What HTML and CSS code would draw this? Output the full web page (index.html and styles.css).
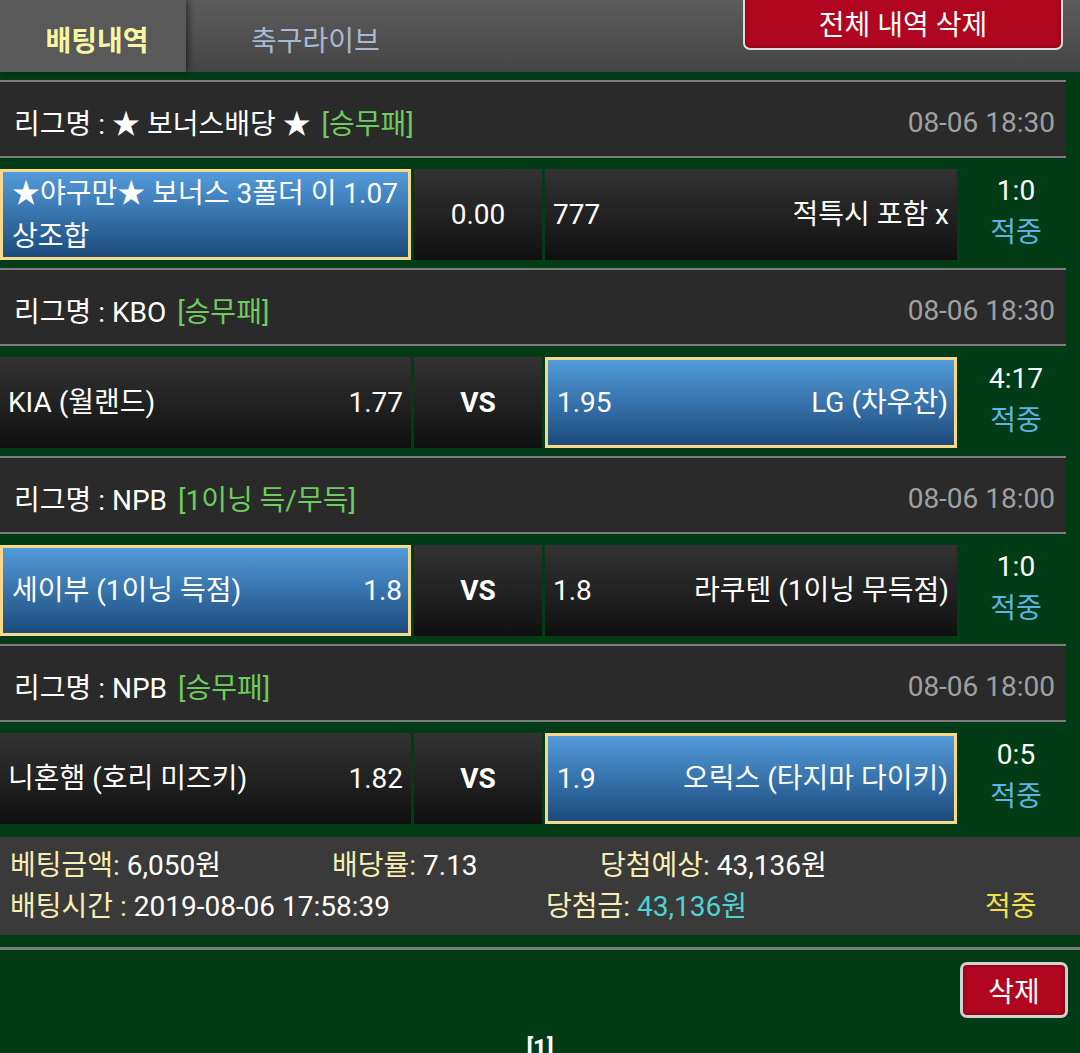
FILE: index.html
```html
<!DOCTYPE html>
<html lang="ko">
<head>
    <meta charset="UTF-8">
    <meta name="viewport" content="width=device-width, initial-scale=1.0">
    <title>배팅내역</title>
    <link rel="stylesheet" href="styles.css">
</head>
<body>

<div class="topbar">
    <div class="tab active">배팅내역</div>
    <div class="tab">축구라이브</div>
    <button class="btn-red btn-all">전체 내역 삭제</button>
</div>

<div class="list">
    <div class="league">
        <span>리그명 : ★ 보너스배당 ★ <span class="type">[승무패]</span></span>
        <span class="time">08-06 18:30</span>
    </div>
    <div class="match">
        <div class="cell sel"><span class="wrap">★야구만★ 보너스 3폴더 이 1.07 상조합</span></div>
        <div class="cell mid">0.00</div>
        <div class="cell"><span>777</span><span>적특시 포함 x</span></div>
        <div class="result"><div>1:0</div><div class="hit">적중</div></div>
    </div>

    <div class="league">
        <span>리그명 : KBO <span class="type">[승무패]</span></span>
        <span class="time">08-06 18:30</span>
    </div>
    <div class="match">
        <div class="cell"><span>KIA (월랜드)</span><span>1.77</span></div>
        <div class="cell mid vs">VS</div>
        <div class="cell sel"><span>1.95</span><span>LG (차우찬)</span></div>
        <div class="result"><div>4:17</div><div class="hit">적중</div></div>
    </div>

    <div class="league">
        <span>리그명 : NPB <span class="type">[1이닝 득/무득]</span></span>
        <span class="time">08-06 18:00</span>
    </div>
    <div class="match">
        <div class="cell sel"><span>세이부 (1이닝 득점)</span><span>1.8</span></div>
        <div class="cell mid vs">VS</div>
        <div class="cell"><span>1.8</span><span>라쿠텐 (1이닝 무득점)</span></div>
        <div class="result"><div>1:0</div><div class="hit">적중</div></div>
    </div>

    <div class="league">
        <span>리그명 : NPB <span class="type">[승무패]</span></span>
        <span class="time">08-06 18:00</span>
    </div>
    <div class="match">
        <div class="cell"><span>니혼햄 (호리 미즈키)</span><span>1.82</span></div>
        <div class="cell mid vs">VS</div>
        <div class="cell sel"><span>1.9</span><span>오릭스 (타지마 다이키)</span></div>
        <div class="result"><div>0:5</div><div class="hit">적중</div></div>
    </div>
</div>

<div class="summary">
    <div class="sum-row">
        <span class="s1"><span class="lbl">베팅금액:</span> 6,050원</span>
        <span class="s2"><span class="lbl">배당률:</span> 7.13</span>
        <span class="s3"><span class="lbl">당첨예상:</span> 43,136원</span>
    </div>
    <div class="sum-row">
        <span class="s1 wide"><span class="lbl">배팅시간 :</span> 2019-08-06 17:58:39</span>
        <span class="s3 win"><span class="lbl">당첨금:</span> <span class="money">43,136원</span></span>
        <span class="state">적중</span>
    </div>
</div>

<div class="actions">
    <button class="btn-red btn-del">삭제</button>
</div>

<div class="pager">[1]</div>

</body>
</html>
```

FILE: styles.css
```css
body {
    margin: 0;
    background-color: #013c16;
    font-family: Roboto, "Noto Sans CJK KR", sans-serif;
    font-size: 28px;
    color: #fff;
    width: 1080px;
    overflow: hidden;
}
.topbar {
    height: 72px;
    display: flex;
    align-items: flex-start;
    background: linear-gradient(#5c5c5c, #454545);
}
.tab {
    height: 72px;
    line-height: 84px;
    color: #a9b9d2;
    padding: 0 66px 0 58px;
}
.tab.active {
    width: 193px;
    box-sizing: border-box;
    padding: 0 0 0 1px;
    text-align: center;
    color: #f6f6a3;
    font-weight: bold;
    background: linear-gradient(#595959, #595959) no-repeat 0 0 / 186px 72px;
    position: relative;
}
.tab.active::after {
    content: "";
    position: absolute;
    left: 0;
    top: 0;
    width: 186px;
    height: 72px;
    box-shadow: 3px 0 6px rgba(0,0,0,0.45);
    pointer-events: none;
}
.btn-red {
    font-family: inherit;
    color: #fff;
    background: #b1061f;
    border: 2px solid #dcdcdc;
    border-radius: 7px;
    cursor: pointer;
    box-shadow: inset 0 0 4px rgba(0,0,0,0.4);
}
.btn-all {
    margin-left: auto;
    margin-right: 17px;
    margin-top: -6px;
    width: 320px;
    height: 56px;
    padding-top: 2px;
    font-size: 28px;
}
.list {
    padding-top: 8px;
    width: 1066px;
}
.league {
    height: 78px;
    box-sizing: border-box;
    padding: 6px 9px 0 14px;
    border-top: 2px solid #7d7d7d;
    border-bottom: 2px solid #7d7d7d;
    background: #2a2a2a;
    display: flex;
    align-items: center;
    justify-content: space-between;
}
.type {
    color: #6ccd5e;
    margin-left: 4px;
}
.time {
    color: #a0a0a0;
    margin-right: 2px;
}
.match {
    display: grid;
    grid-template-columns: 411px 128px 412px 1fr;
    grid-template-rows: 91px;
    column-gap: 3px;
    margin: 11px -14px 8px 0;
}
.cell {
    display: flex;
    align-items: center;
    justify-content: space-between;
    padding: 0 8px;
    background: linear-gradient(#333, #101010);
    line-height: 43px;
}
.cell.sel {
    background: linear-gradient(#539bdb, #1c4b7c);
    border: 3px solid #f6da8a;
    padding: 0 6px 0 9px;
}
.cell.mid {
    justify-content: center;
}
.vs {
    font-weight: bold;
}
.result {
    display: flex;
    flex-direction: column;
    justify-content: center;
    align-items: center;
    line-height: 42px;
    padding-bottom: 6px;
    padding-right: 8px;
}
.hit {
    color: #5ab4e6;
}
.summary {
    margin-top: 13px;
    height: 98px;
    box-sizing: border-box;
    padding-top: 5px;
    background: #3a3a3a;
}
.sum-row {
    display: flex;
    height: 41px;
    align-items: center;
}
.lbl {
    color: #f7efb2;
}
.s1 {
    width: 332px;
    padding-left: 10px;
    box-sizing: border-box;
}
.s1.wide {
    width: 546px;
}
.s2 {
    width: 268px;
}
.money {
    color: #4fd2d2;
}
.win {
    width: 439px;
}
.state {
    color: #f2e24a;
}
.actions {
    margin-top: 12px;
    border-top: 3px solid #7d7d7d;
    padding: 12px 12px 0 0;
    display: flex;
    justify-content: flex-end;
}
.btn-del {
    width: 108px;
    height: 56px;
    border-width: 3px;
    border-color: #d0d0d0;
    font-size: 28px;
}
.pager {
    text-align: center;
    font-weight: bold;
    font-size: 24px;
    margin-top: 16px;
}
```
